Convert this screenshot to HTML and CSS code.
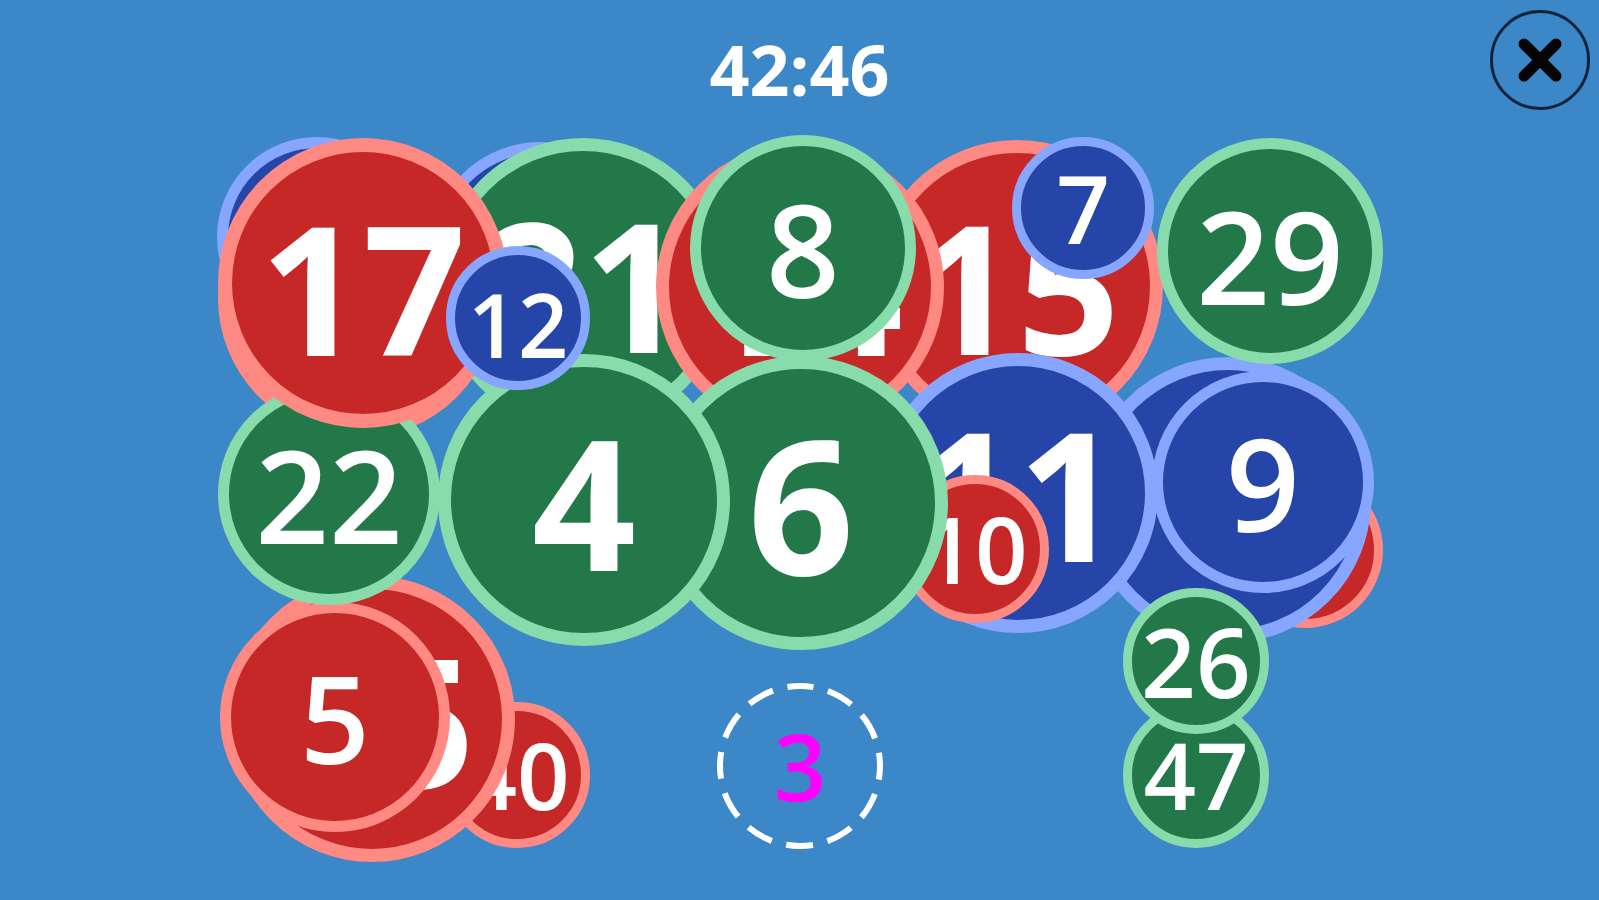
FILE: index.html
```html
<!DOCTYPE html>
<html lang="en">
<head>
<meta charset="utf-8">
<title>Number Bubbles</title>
<link rel="stylesheet" href="styles.css">
</head>
<body>
<div class="screen">
  <header class="hud">
    <div class="timer">42:46</div>
  </header>

  <div class="board">
    <div class="ball blue mid" style="--x:317px;--y:237px;--r:100px">19</div>
    <div class="ball red big" style="--x:358px;--y:298px;--r:140px">33</div>
    <div class="ball red small" style="--x:517px;--y:775px;--r:73px">40</div>
    <div class="ball red big" style="--x:372px;--y:719px;--r:143px">25</div>
    <div class="ball red mid" style="--x:335px;--y:717px;--r:115px;--f:122px">5</div>
    <div class="ball green mid" style="--x:329px;--y:494px;--r:111px">22</div>
    <div class="ball blue mid" style="--x:540px;--y:252px;--r:110px">16</div>
    <div class="ball green big" style="--x:583px;--y:284px;--r:146px">21</div>
    <div class="ball red big" style="--x:363px;--y:283px;--r:145px;--b:14px;--dy:4px">17</div>
    <div class="ball red big" style="--x:1017px;--y:286px;--r:146px">15</div>
    <div class="ball red big" style="--x:800px;--y:287px;--r:144px">14</div>
    <div class="ball green mid" style="--x:803px;--y:248px;--r:113px">8</div>
    <div class="ball blue small" style="--x:1083px;--y:208px;--r:71px;--f:94px">7</div>
    <div class="ball red small" style="--x:1305px;--y:550px;--r:78px">41</div>
    <div class="ball blue big" style="--x:1228px;--y:500px;--r:143px;--f:129px">13</div>
    <div class="ball blue mid" style="--x:1263px;--y:482px;--r:111px">9</div>
    <div class="ball green mid" style="--x:1270px;--y:251px;--r:113px;--dy:4px">29</div>
    <div class="ball blue big" style="--x:1018px;--y:493px;--r:140px">11</div>
    <div class="ball red small" style="--x:975px;--y:549px;--r:74px">10</div>
    <div class="ball green big" style="--x:801px;--y:503px;--r:147px;--f:186px">6</div>
    <div class="ball green big" style="--x:584px;--y:500px;--r:146px;--f:182px">4</div>
    <div class="ball blue small" style="--x:518px;--y:318px;--r:72px;--f:88px;--dy:6px">12</div>
    <div class="ball green small" style="--x:1196px;--y:775px;--r:73px">47</div>
    <div class="ball green small" style="--x:1196px;--y:661px;--r:73px;--f:96px">26</div>

    <div class="target">
      <svg class="target-ring" viewBox="0 0 170 170" width="170" height="170" aria-hidden="true">
        <circle cx="85" cy="85" r="80" fill="none" stroke="#ffffff" stroke-width="6" stroke-dasharray="27 14.89" stroke-dashoffset="13.5" transform="rotate(-90 85 85)"/>
      </svg>
      <span class="target-num">3</span>
    </div>
  </div>

  <button class="close" type="button" aria-label="Close">
    <svg viewBox="0 0 104 104" width="104" height="104" aria-hidden="true">
      <circle cx="52" cy="52" r="48.5" fill="none" stroke="#10233a" stroke-width="3"/>
      <path d="M36 36 L68 68 M68 36 L36 68" stroke="#050505" stroke-width="11" stroke-linecap="round" fill="none"/>
    </svg>
  </button>
</div>
</body>
</html>
```

FILE: styles.css
```css
* {
  box-sizing: border-box;
}

html, body {
  margin: 0;
  padding: 0;
}

body {
  background: #3c87c7;
  font-family: "Open Sans", "Noto Sans", "DejaVu Sans", sans-serif;
  overflow: hidden;
}

.screen {
  position: relative;
  width: 1599px;
  height: 900px;
  background: #3c87c7;
  overflow: hidden;
}

.hud {
  display: flex;
  justify-content: center;
  padding-top: 34px;
}

.timer {
  color: #ffffff;
  font-size: 70px;
  font-weight: 700;
  line-height: 1;
}

.board {
  position: absolute;
  inset: 0;
}

.ball {
  --b: 12px;
  --f: 180px;
  --dy: 0px;
  position: absolute;
  left: calc(var(--x) - var(--r));
  top: calc(var(--y) - var(--r));
  width: calc(var(--r) * 2);
  height: calc(var(--r) * 2);
  border-radius: 50%;
  border: var(--b) solid transparent;
  display: flex;
  align-items: center;
  justify-content: center;
  padding-top: calc(var(--dy) * 2);
  color: #ffffff;
  font-weight: 700;
  font-size: var(--f);
  line-height: 1;
  white-space: nowrap;
}

.ball.big {
  --b: 13px;
  --f: 180px;
}

.ball.mid {
  --b: 11px;
  --f: 129px;
  font-weight: 600;
}

.ball.small {
  --b: 9px;
  --f: 92px;
  font-weight: 600;
}

.red {
  background: #c62828;
  border-color: #ff8a84;
}

.green {
  background: #237849;
  border-color: #88dcab;
}

.blue {
  background: #2645a8;
  border-color: #86a6ff;
}

.target {
  position: absolute;
  left: 715px;
  top: 681px;
  width: 170px;
  height: 170px;
  display: flex;
  align-items: center;
  justify-content: center;
}

.target-ring {
  position: absolute;
  left: 0;
  top: 0;
}

.target-num {
  position: relative;
  color: #ff00ff;
  font-size: 92px;
  font-weight: 600;
  line-height: 1;
}

.close {
  position: absolute;
  left: 1488px;
  top: 8px;
  width: 104px;
  height: 104px;
  padding: 0;
  margin: 0;
  border: 0;
  background: transparent;
  cursor: pointer;
}

.close svg {
  display: block;
}
```
